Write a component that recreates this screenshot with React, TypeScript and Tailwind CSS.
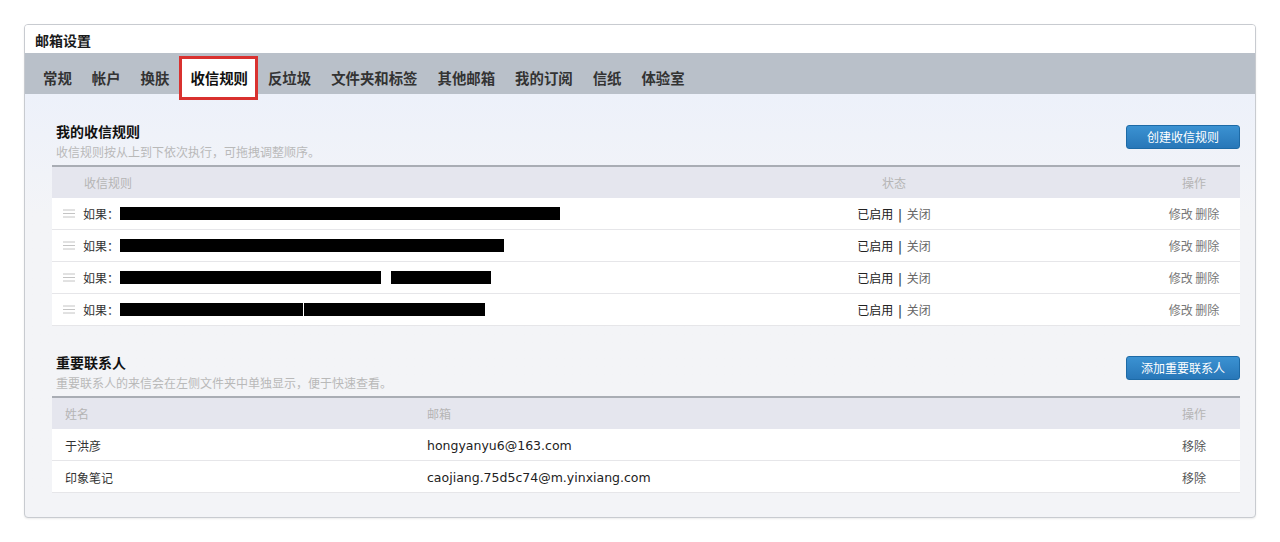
import React from "react";

const cjk = { fontFamily: '"Microsoft YaHei", "Noto Sans CJK SC", "Noto Sans", sans-serif' };

const tabs = ["常规", "帐户", "换肤", "收信规则", "反垃圾", "文件夹和标签", "其他邮箱", "我的订阅", "信纸", "体验室"];

// widths of the redacted bars in each rule row
const rules: number[][] = [[440], [384], [261, 100], [183, 181]];

const contacts = [
  { name: "于洪彦", email: "hongyanyu6@163.com" },
  { name: "印象笔记", email: "caojiang.75d5c74@m.yinxiang.com" },
];

const Handle = () => (
  <svg width="12" height="9" viewBox="0 0 12 9" className="shrink-0">
    <path d="M0 1h12M0 4.5h12M0 8h12" stroke="#c4c4c4" strokeWidth="1" />
  </svg>
);

const BlueButton = ({ label }: { label: string }) => (
  <button className="mt-[4px] h-[24px] w-[114px] rounded-[3px] border border-[#1d6aa6] bg-linear-to-b from-[#3b92d2] to-[#2877b8] text-[12px] text-white">
    {label}
  </button>
);

const SectionHead = ({ title, desc, button }: { title: string; desc: string; button: string }) => (
  <div className="flex items-start justify-between">
    <div className="pl-[4px]">
      <div className="h-[20px] text-[14px] font-bold leading-[20px] text-[#111]">{title}</div>
      <div className="mt-[3px] text-[12px] leading-[16px] text-[#b9b9b9]">{desc}</div>
    </div>
    <BlueButton label={button} />
  </div>
);

export default function App() {
  return (
    <div className="min-h-[542px] bg-white pl-[24px] pt-[24px]" style={cjk}>
      <div className="w-[1232px] h-[494px] rounded-[4px] border border-[#c8cbd0] bg-[#f3f4f7] shadow-[0_1px_2px_rgba(0,0,0,0.08)] overflow-hidden">
        {/* title */}
        <div className="h-[28px] bg-white px-[10px] text-[14px] font-bold leading-[30px] text-[#1a1a1a]">邮箱设置</div>

        {/* tabs */}
        <div className="relative z-10 flex h-[41px] items-start bg-[#b9c0c9] pl-[8px] pt-[3px]">
          {tabs.map((t) => {
            const active = t === "收信规则";
            return (
              <div
                key={t}
                className={
                  active
                    ? "flex h-[44px] items-center border-[3px] border-[#d9312f] bg-white pl-[8px] pr-[7px] text-[14.4px] font-bold text-[#111]"
                    : "flex h-[44px] items-center border-[3px] border-transparent px-[7px] text-[14.4px] font-bold text-[#333]"
                }
              >
                {t}
              </div>
            );
          })}
        </div>

        <div className="bg-linear-to-b from-[#edf1fa] to-[#f3f4f7] to-[120px] pl-[27px] pr-[15px] pt-[27px]">
          {/* rules */}
          <SectionHead title="我的收信规则" desc="收信规则按从上到下依次执行，可拖拽调整顺序。" button="创建收信规则" />
          <div className="mt-[5px] border-t-2 border-[#a9adb4]">
            <div className="flex h-[31px] items-center bg-[#e5e6ee] text-[12px] text-[#b5b5b5]">
              <div className="flex-1 pl-[32px]">收信规则</div>
              <div className="w-[200px] text-center">状态</div>
              <div className="w-[154px]" />
              <div className="w-[92px] text-center">操作</div>
            </div>
            {rules.map((bars, i) => (
              <div key={i} className="flex h-[32px] items-center border-b border-[#e6e6e9] bg-white text-[12px] text-[#333]">
                <div className="flex flex-1 items-center pl-[11px]">
                  <Handle />
                  <span className="ml-[8px] w-[37px]">如果：</span>
                  {bars.map((w, j) => (
                    <span key={j} className={j === 0 ? "h-[13px] bg-black" : i === 3 ? "ml-[1px] h-[13px] bg-black" : "ml-[10px] h-[13px] bg-black"} style={{ width: w }} />
                  ))}
                </div>
                <div className="w-[200px] text-center">
                  <span className="text-[#222]">已启用</span>
                  <span className="mx-[5px] font-bold text-[#444]">|</span>
                  <span className="text-[#666]">关闭</span>
                </div>
                <div className="w-[154px]" />
                <div className="w-[92px] text-center text-[#777]">修改 删除</div>
              </div>
            ))}
          </div>

          {/* contacts */}
          <div className="mt-[26px]">
            <SectionHead title="重要联系人" desc="重要联系人的来信会在左侧文件夹中单独显示，便于快速查看。" button="添加重要联系人" />
          </div>
          <div className="mt-[5px] border-t-2 border-[#a9adb4]">
            <div className="flex h-[31px] items-center bg-[#e5e6ee] text-[12px] text-[#b5b5b5]">
              <div className="w-[362px] pl-[13px]">姓名</div>
              <div className="flex-1 pl-[13px]">邮箱</div>
              <div className="w-[92px] text-center">操作</div>
            </div>
            {contacts.map((c) => (
              <div key={c.email} className="flex h-[32px] items-center border-b border-[#e6e6e9] bg-white pt-[2px] text-[12px] text-[#333]">
                <div className="w-[362px] pl-[13px]">{c.name}</div>
                <div className="mt-[2px] flex-1 pl-[13px] text-[12.5px] text-[#222]" style={{ fontFamily: '"DejaVu Sans", Verdana, sans-serif' }}>
                  {c.email}
                </div>
                <div className="w-[92px] text-center text-[#555]">移除</div>
              </div>
            ))}
          </div>
        </div>
      </div>
    </div>
  );
}
